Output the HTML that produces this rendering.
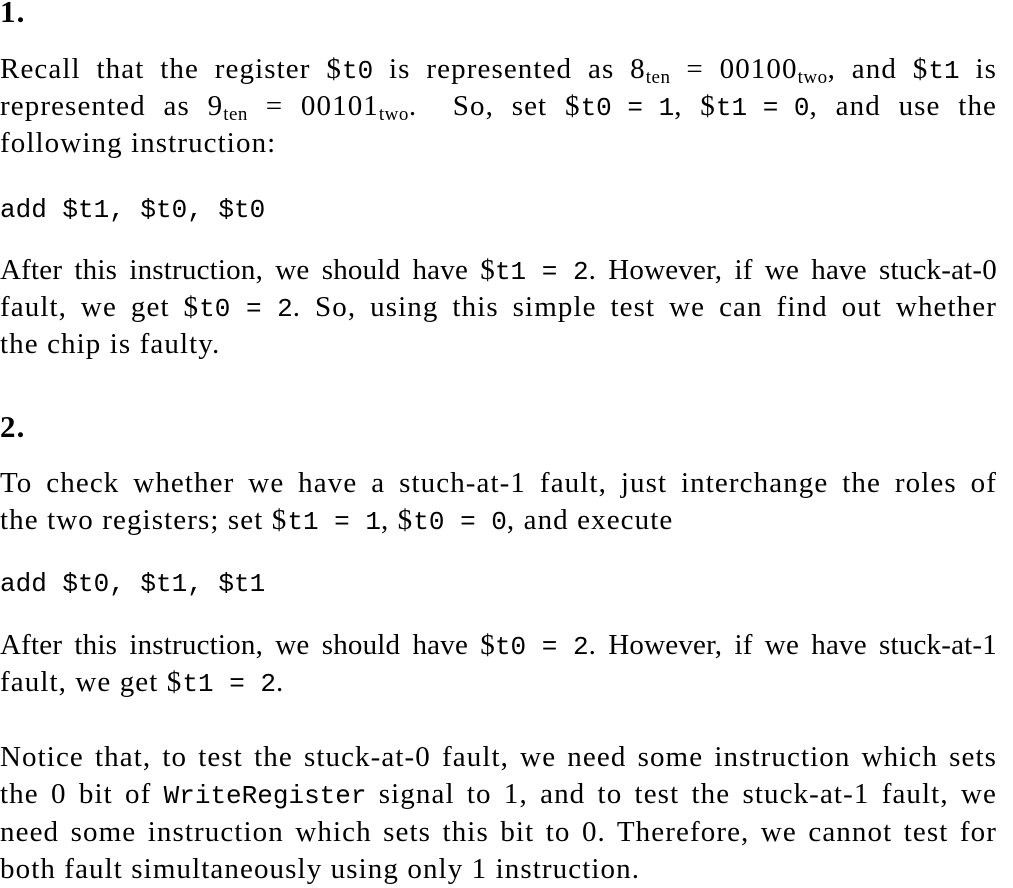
<!DOCTYPE html>
<html><head><meta charset="utf-8"><style>
body{margin:0;width:1013px;height:888px;background:#fff;position:relative;overflow:hidden;font-family:"Liberation Serif",serif;font-size:29px;letter-spacing:1.1px;color:#000}
.l{position:absolute;left:0;width:997px;height:37px;line-height:37px;white-space:nowrap}
.j{text-align:justify;text-align-last:justify;white-space:normal}
.t{letter-spacing:0.2px}
.n{white-space:nowrap}
code,.c{font-family:"Liberation Mono",monospace;font-size:26px;letter-spacing:0}
code{display:inline-block;white-space:pre}
sub{font-size:19px;vertical-align:-5px;line-height:0;letter-spacing:0.5px}
b{font-weight:bold;font-size:31px}
</style></head><body>
<div class="l" style="top:-7px"><b>1.</b></div>
<div class="l j" style="top:51px">Recall that the register $<code>t0</code> is represented as 8<sub>ten</sub> = 00100<sub>two</sub>, and $<code>t1</code> is</div>
<div class="l j" style="top:88px">represented as 9<sub>ten</sub> = 00101<sub>two</sub>. &nbsp;So, set $<code>t0 = 1</code>, $<code>t1 = 0</code>, and use the</div>
<div class="l" style="top:125px">following instruction:</div>
<div class="l c" style="top:192px">add $t1, $t0, $t0</div>
<div class="l j t" style="top:252px">After this instruction, we should have $<code>t1 = 2</code>. However, if we have <span class="n">stuck-at-0</span></div>
<div class="l j" style="top:289px">fault, we get $<code>t0 = 2</code>. So, using this simple test we can find out whether</div>
<div class="l" style="top:326px">the chip is faulty.</div>
<div class="l" style="top:408px"><b>2.</b></div>
<div class="l j" style="top:465px">To check whether we have a <span class="n">stuch-at-1</span> fault, just interchange the roles of</div>
<div class="l" style="top:502px">the two registers; set $<code>t1 = 1</code>, $<code>t0 = 0</code>, and execute</div>
<div class="l c" style="top:566px">add $t0, $t1, $t1</div>
<div class="l j t" style="top:627px">After this instruction, we should have $<code>t0 = 2</code>. However, if we have <span class="n">stuck-at-1</span></div>
<div class="l" style="top:664px">fault, we get $<code>t1 = 2</code>.</div>
<div class="l j" style="top:739px">Notice that, to test the <span class="n">stuck-at-0</span> fault, we need some instruction which sets</div>
<div class="l j" style="top:776px">the 0 bit of <code>WriteRegister</code> signal to 1, and to test the <span class="n">stuck-at-1</span> fault, we</div>
<div class="l j" style="top:814px">need some instruction which sets this bit to 0. Therefore, we cannot test for</div>
<div class="l" style="top:851px">both fault simultaneously using only 1 instruction.</div>
</body></html>
